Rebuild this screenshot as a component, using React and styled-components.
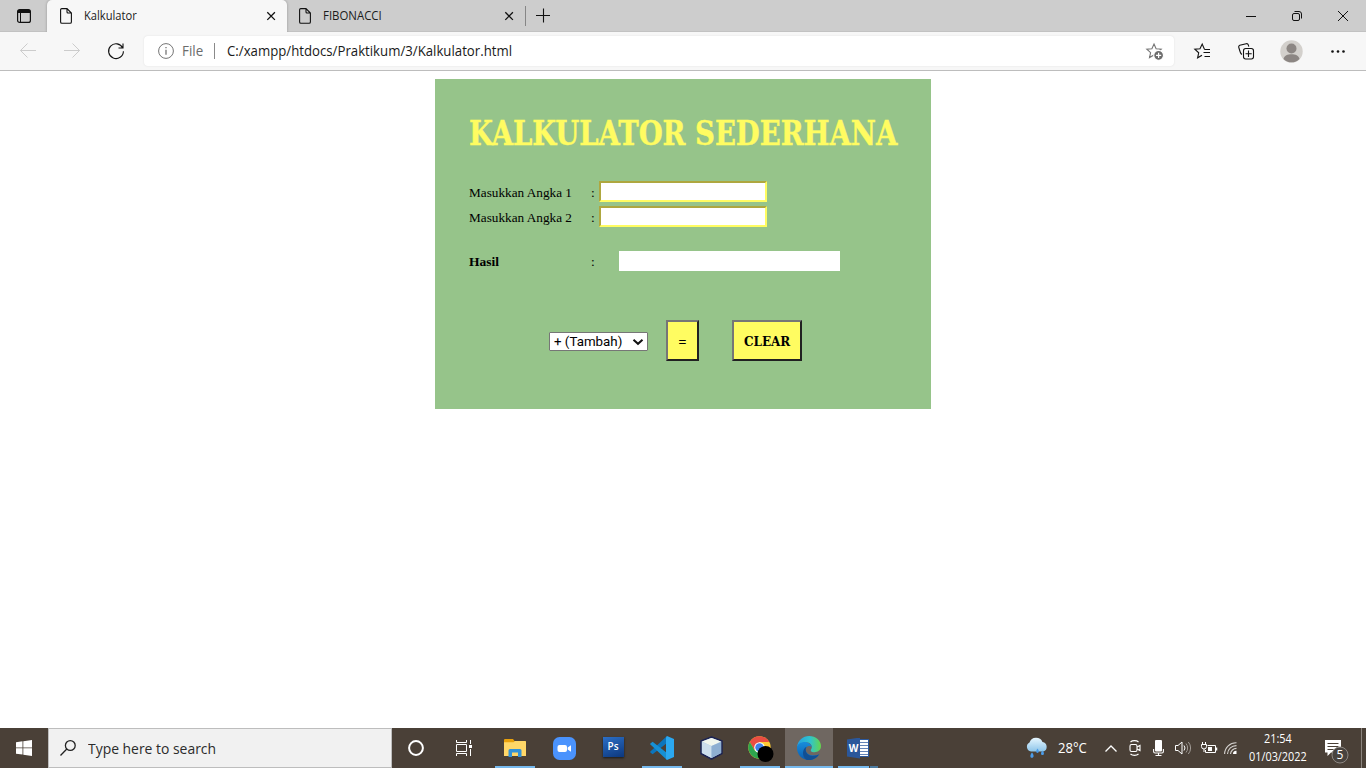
import React, { useLayoutEffect, useRef, useState } from "react";
import styled, { createGlobalStyle } from "styled-components";

const Global = createGlobalStyle`
  * { box-sizing: border-box; }
  body { margin: 0; overflow: hidden; background: #fff; font-family: "Open Sans", "Noto Sans", sans-serif; }
`;

const FitBox = styled.span`
  display: block;
  flex: none;
  width: ${(p) => p.$w}px;
  white-space: nowrap;
`;
const FitInner = styled.span`
  display: inline-block;
  transform-origin: 0 50%;
`;

/* Keeps a line of text at a fixed width, whatever the font's own advance is. */
function Fit({ width, children }) {
  const ref = useRef(null);
  const [scale, setScale] = useState(1);
  useLayoutEffect(() => {
    setScale(width / ref.current.offsetWidth);
  }, [width]);
  return (
    <FitBox $w={width}>
      <FitInner ref={ref} style={{ transform: `scaleX(${scale})` }}>{children}</FitInner>
    </FitBox>
  );
}

const Screen = styled.div`
  width: 1366px;
  height: 768px;
  display: flex;
  flex-direction: column;
  overflow: hidden;
`;
const Icon = styled.svg`
  display: block;
  flex: none;
  overflow: visible;
`;

/* Browser chrome */
const TabStrip = styled.div`
  height: 32px;
  flex: none;
  display: flex;
  background: #cdcdcd;
  box-shadow: inset 0 -1px 0 #c2c2c2;
`;
const TabActions = styled.div`
  width: 47px;
  padding: 9px 0 0 17px;
`;
const Tab = styled.div`
  width: ${(p) => p.$w}px;
  height: 32px;
  display: flex;
  align-items: center;
  padding: 0 11px 0 ${(p) => (p.$active ? 13 : 12)}px;
  border-radius: 5px 5px 0 0;
  background: ${(p) => (p.$active ? "#f7f7f7" : "transparent")};
  box-shadow: ${(p) => (p.$active ? "0 0 3px rgba(0,0,0,.28)" : "none")};
  clip-path: inset(0 -4px 0 -4px);
  font-size: 12px;
  line-height: 16px;
  color: #1b1b1b;
`;
const TabTitle = styled.div`
  flex: 1;
  padding-left: 12px;
`;
const NewTab = styled.div`
  height: 20px;
  margin-top: 6px;
  padding: 2px 0 0 10px;
  border-left: 1px solid #868686;
`;
const WindowButtons = styled.div`
  margin-left: auto;
  display: flex;
`;
const WindowButton = styled.div`
  width: 46px;
  height: 32px;
  display: grid;
  place-items: center;
`;
const Toolbar = styled.div`
  height: 39px;
  flex: none;
  display: flex;
  align-items: center;
  background: #f7f7f7;
  border-bottom: 1px solid #bdbdbd;
`;
const NavButtons = styled.div`
  width: 144px;
  display: flex;
  gap: 28px;
  padding-left: 20px;
`;
const AddressBar = styled.div`
  width: 1030px;
  height: 30px;
  display: flex;
  align-items: center;
  padding: 0 10px 0 14px;
  border-radius: 4px;
  background: #fff;
  box-shadow: 0 0 2px rgba(0, 0, 0, 0.1);
  font-size: 14px;
  line-height: 20px;
  color: #1a1a1a;
`;
const Scheme = styled.div`
  height: 16px;
  display: flex;
  align-items: center;
  margin: 0 12px 0 8px;
  padding-right: 11px;
  border-right: 1px solid #8a8a8a;
  color: #6c6c6c;
`;
const Url = styled.div`
  flex: 1;
`;
const ToolbarIcons = styled.div`
  flex: 1;
  display: flex;
  align-items: center;
  padding-left: 20px;
`;
const ToolSlot = styled.div`
  width: ${(p) => p.$w}px;
`;

/* Page */
const Page = styled.main`
  flex: 1;
  padding-top: 8px;
  background: #fff;
`;
const Calculator = styled.section`
  width: 496px;
  height: 330px;
  margin: 0 auto;
  padding: 32px 34px 0;
  background: #96c48a;
  color: #000;
  font-family: "Liberation Serif", serif;
  font-size: 13.5px;
`;
const Title = styled.h1`
  height: 45px;
  margin: 0 0 25px;
  font-family: "DejaVu Serif Condensed", "DejaVu Serif", serif;
  font-stretch: condensed;
  font-size: 33px;
  line-height: 45px;
  font-weight: bold;
  color: #fffc61;
  -webkit-text-stroke: 0.4px #fffc61;
`;
const Row = styled.div`
  height: 21px;
  display: flex;
  align-items: center;
  margin-bottom: ${(p) => p.$gap}px;
  line-height: 21px;
`;
const Label = styled.label`
  width: 121px;
  padding-top: 2px;
  font-weight: ${(p) => (p.$bold ? "bold" : "normal")};
`;
const Colon = styled.span`
  width: ${(p) => p.$w}px;
  padding: 2px 0 0 1px;
`;
const NumberInput = styled.input`
  width: 168px;
  height: 21px;
  padding: 1px 2px;
  border: 2px solid;
  border-color: #aea73f #fffc61 #fffc61 #aea73f;
  border-radius: 0;
  background: #fff;
  outline: 0;
`;
const Result = styled.output`
  width: 221px;
  height: 20px;
  background: #fff;
`;
const Controls = styled.div`
  display: flex;
  align-items: center;
  padding-left: 80px;
`;
const Operator = styled.div`
  width: 99px;
  height: 19px;
  display: flex;
  align-items: center;
  justify-content: space-between;
  margin: 2px 18px 0 0;
  padding: 0 4px;
  border: 1px solid #767676;
  border-radius: 1px;
  background: #fff;
  font-family: Roboto, sans-serif;
  font-size: 13.33px;
  line-height: 17px;
`;
const Button = styled.button`
  width: ${(p) => p.$w}px;
  height: 41px;
  display: grid;
  place-items: center;
  margin: 0 33px 0 0;
  padding: 2px 0 0;
  border: 2px solid;
  border-color: #767676 #212121 #212121 #767676;
  background: #fffc61;
  color: #000;
  font-family: "DejaVu Serif Condensed", "DejaVu Serif", serif;
  font-stretch: condensed;
  font-size: 13px;
  font-weight: ${(p) => (p.$plain ? "normal" : "bold")};
`;

/* Taskbar */
const Taskbar = styled.footer`
  height: 40px;
  flex: none;
  display: flex;
  background: #4a4037;
  color: #fff;
`;
const Start = styled.div`
  width: 48px;
  display: grid;
  place-items: center;
`;
const Search = styled.div`
  width: 344px;
  display: flex;
  align-items: center;
  gap: 12px;
  padding-left: 11px;
  border: 1px solid #bdbdbd;
  background: #f1f1f1;
  color: #2b2b2b;
  font-size: 15px;
  line-height: 20px;
`;
const System = styled.div`
  width: 98px;
  display: flex;
`;
const Task = styled.div`
  width: ${(p) => p.$w || 49}px;
  height: 40px;
  display: grid;
  place-items: center;
  padding-left: ${(p) => (p.$w ? 0 : 1)}px;
  background: ${(p) => (p.$active ? "linear-gradient(to right, transparent 1px, #6f6761 1px)" : "none")};
`;
const Running = styled.div`
  grid-area: 1 / 1;
  align-self: end;
  justify-self: start;
  width: ${(p) => p.$w}px;
  height: 2px;
  margin-left: ${(p) => (48 - p.$w) / 2}px;
  background: ${(p) => (p.$stack ? "linear-gradient(to right, #76b9ed 31px, #4a4037 31px 32px, #4c7ba0 32px)" : "#76b9ed")};
`;
const TaskIcon = styled.div`
  grid-area: 1 / 1;
`;
const Tray = styled.div`
  margin-left: auto;
  display: flex;
  align-items: center;
  padding-right: 4px;
`;
const Weather = styled.div`
  display: flex;
  align-items: center;
  gap: 10px;
  margin-right: 17px;
  font-size: 14px;
  line-height: 20px;
`;
const TraySlot = styled.div`
  width: ${(p) => p.$w}px;
  display: grid;
  place-items: center;
`;
const Clock = styled.div`
  width: 58px;
  display: flex;
  flex-direction: column;
  align-items: center;
  margin: 0 16px 0 0;
  font-size: 12px;
  line-height: 18px;
`;
const Notice = styled.div`
  width: 39px;
  height: 40px;
  padding: 11px 0 0 1px;
  border-right: 1px solid #8b847e;
`;

const PageIcon = () => (
  <Icon width="12" height="16" viewBox="0 0 12 16" fill="none" stroke="#111" strokeWidth="1.1">
    <path d="M1.8 .6H7L11.4 5V14a1.3 1.3 0 0 1-1.3 1.3H1.9A1.3 1.3 0 0 1 .6 14V1.8A1.2 1.2 0 0 1 1.8.6ZM7 .6V4a1 1 0 0 0 1 1h3.4" />
  </Icon>
);
const CloseIcon = () => (
  <Icon width="10" height="10" viewBox="0 0 10 10" stroke="#111" strokeWidth="1.3">
    <path d="M1.3 1.3l7.600 7.600M8.900 1.300L1.300 8.900" />
  </Icon>
);
const STAR = "M8 1L10.1 5.7L15.2 6.2L11.4 9.6L12.5 14.6L8 12L3.5 14.6L4.6 9.6L.8 6.2L5.9 5.7Z";

function BrowserTab({ title, width, textWidth, active }) {
  return (
    <Tab $w={width} $active={active}>
      <PageIcon />
      <TabTitle><Fit width={textWidth}>{title}</Fit></TabTitle>
      <CloseIcon />
    </Tab>
  );
}

function Browser() {
  return (
    <>
      <TabStrip>
        <TabActions>
          <Icon width="14" height="14" viewBox="0 0 14 14" fill="none" stroke="#111" strokeWidth="1.2">
            <rect x=".6" y=".6" width="12.8" height="12.8" rx="2" />
            <path d="M1 2.5h12" strokeWidth="3" /><path d="M3.500 4v9" strokeWidth="1" />
          </Icon>
        </TabActions>
        <BrowserTab title="Kalkulator" width={240} textWidth={53} active />
        <BrowserTab title="FIBONACCI" width={238} textWidth={59} />
        <NewTab>
          <Icon width="14" height="14" viewBox="0 0 14 14" stroke="#111" strokeWidth="1.1"><path d="M0 7.5h14M7.5 0.500v14" /></Icon>
        </NewTab>
        <WindowButtons>
          <WindowButton><Icon width="10" height="10" stroke="#111"><path d="M0 5.5h10" /></Icon></WindowButton>
          <WindowButton>
            <Icon width="10" height="10" viewBox="0 0 10 10" fill="none" stroke="#111">
              <rect x=".5" y="2.5" width="7" height="7" rx="1.5" /><path d="M2.5.5H7A2.5 2.5 0 0 1 9.5 3v4.5" />
            </Icon>
          </WindowButton>
          <WindowButton><Icon width="10" height="10" viewBox="0 0 10 10" stroke="#111"><path d="M0 0l10 10M10 0L0 10" /></Icon></WindowButton>
        </WindowButtons>
      </TabStrip>
      <Toolbar>
        <NavButtons>
          <Icon width="16" height="16" viewBox="0 0 16 16" fill="none" stroke="#ccc" strokeWidth="1"><path d="M16 7.5H.5M7.5.5l-7 7 7 7" /></Icon>
          <Icon width="16" height="16" viewBox="0 0 16 16" fill="none" stroke="#ccc" strokeWidth="1"><path d="M0 7.5h15.5M8.5.5l7 7-7 7" /></Icon>
          <Icon width="16" height="16" viewBox="0 0 16 16" fill="none" stroke="#111" strokeWidth="1.100"><path d="M14.7 5A7.400 7.400 0 1 0 15.400 8.200M15 .5V5H10.500" /></Icon>
        </NavButtons>
        <AddressBar>
          <Icon width="16" height="16" viewBox="0 0 16 16" fill="none" stroke="#757575"><circle cx="8" cy="8" r="7.4" /><path d="M8 6.8v5M8 4v1.3" strokeWidth="1.3" /></Icon>
          <Scheme><Fit width={21}>File</Fit></Scheme>
          <Url><Fit width={285}>C:/xampp/htdocs/Praktikum/3/Kalkulator.html</Fit></Url>
          <Icon width="18" height="17" viewBox="0 0 18 17" fill="none" stroke="#757575" strokeWidth="1.1">
            <path d={STAR} />
            <circle cx="12.6" cy="12.3" r="4.9" fill="#6c6c6c" stroke="#fff" /><path d="M10 12.3h5.2M12.6 9.7v5.2" stroke="#fff" strokeWidth="1.2" />
          </Icon>
        </AddressBar>
        <ToolbarIcons>
          <ToolSlot $w={44}>
            <Icon width="18" height="17" viewBox="0 0 18 17" fill="none" stroke="#111" strokeWidth="1.1">
              <path d="M10.800 5.700H10.200L8.200 1 6 5.700.8 6.2l3.900 3.600-1.100 5L8 12.200" />
              <path d="M10.300 6.500h5.700M9.500 9.500h6.500M10.500 13.500h5.500" />
            </Icon>
          </ToolSlot>
          <ToolSlot $w={42}>
            <Icon width="17" height="17" viewBox="0 0 17 17" fill="none" stroke="#111" strokeWidth="1.1">
              <path d="M4 11.500C3 11 2.500 10 2.200 9L.8 4.500A1.700 1.700 0 0 1 1.800 2.300L8.200.7a1.800 1.800 0 0 1 2.100 1.200l.5 1.700" />
              <rect x="5.500" y="5.500" width="10" height="10.500" rx="2.2" /><path d="M10.500 7.500v6.500M7.500 10.700h6.200" />
            </Icon>
          </ToolSlot>
          <ToolSlot $w={51}>
            <Icon width="23" height="23" viewBox="0 0 23 23">
              <circle cx="11.5" cy="11.5" r="11.2" fill="#d3d0cc" /><circle cx="11.5" cy="8.5" r="5" fill="#8c8683" />
              <path d="M3.5 19C4.3 15.5 7.5 14.3 11.5 14.3s7.2 1.2 8 4.7A11.2 11.2 0 0 1 3.5 19Z" fill="#8c8683" />
            </Icon>
          </ToolSlot>
          <Icon width="14" height="3" viewBox="0 0 14 3" fill="#111"><circle cx="1.5" cy="1.5" r="1.3" /><circle cx="7" cy="1.5" r="1.3" /><circle cx="12.5" cy="1.5" r="1.3" /></Icon>
        </ToolbarIcons>
      </Toolbar>
    </>
  );
}

function Kalkulator() {
  return (
    <Calculator>
      <Title><Fit width={428}>KALKULATOR SEDERHANA</Fit></Title>
      <Row $gap={4}><Label><Fit width={103}>Masukkan Angka 1</Fit></Label><Colon $w={9}>:</Colon><NumberInput /></Row>
      <Row $gap={23}><Label><Fit width={103}>Masukkan Angka 2</Fit></Label><Colon $w={9}>:</Colon><NumberInput /></Row>
      <Row $gap={49}><Label $bold><Fit width={30}>Hasil</Fit></Label><Colon $w={29}>:</Colon><Result /></Row>
      <Controls>
        <Operator>
          <Fit width={68}>+ (Tambah)</Fit>
          <Icon width="10" height="6" viewBox="0 0 10 6" fill="none" stroke="#111" strokeWidth="2"><path d="M.5.8L5 4.800 9.500.8" /></Icon>
        </Operator>
        <Button $w={33} $plain><Fit width={9}>=</Fit></Button>
        <Button $w={70}><Fit width={46}>CLEAR</Fit></Button>
      </Controls>
    </Calculator>
  );
}

const ExplorerIcon = () => (
  <Icon width="22" height="18" viewBox="0 0 22 18">
    <path d="M0 1a1 1 0 0 1 1-1h8l1.5 2H21a1 1 0 0 1 1 1v14H0Z" fill="#e9a10c" />
    <path d="M0 3.2h9.5L11 2h10.3l.7.7V17H0Z" fill="#ffd768" />
    <path d="M4.5 18v-6.5a1.5 1.5 0 0 1 1.5-1.5h10a1.5 1.5 0 0 1 1.5 1.5V18H14v-4.5H8V18Z" fill="#3292d8" />
  </Icon>
);
const ZoomIcon = () => (
  <Icon width="23" height="23" viewBox="0 0 23 23">
    <rect width="23" height="23" rx="6.5" fill="#4a93fd" />
    <rect x="4.5" y="8" width="9.500" height="7" rx="2" fill="#fff" /><path d="M14.700 10.400l3.300-2.200v6.600l-3.300-2.200Z" fill="#fff" />
  </Icon>
);
const PsBadge = styled.div`
  width: 21px;
  height: 20px;
  margin-bottom: 3px;
  background: linear-gradient(160deg, #2c6fc6, #0c377d);
  box-shadow: 0 1px 2px #1b1b1b;
  color: #fff;
  text-align: center;
  font-size: 10px;
  font-weight: 600;
  line-height: 18px;
`;
const CodeIcon = () => (
  <Icon width="24" height="24" viewBox="0 0 24 24">
    <path d="M17 0v7L2.6 18.2.4 16.6a.8.8 0 0 1 0-1.2Z" fill="#0b75bd" />
    <path d="M17 24v-7L2.6 5.8.4 7.4a.8.8 0 0 0 0 1.2Z" fill="#1690d5" />
    <path d="M17 0l7 3v18l-7 3-1-1.5V1.5Z" fill="#2ba8f0" />
  </Icon>
);
const CubeIcon = () => (
  <Icon width="23" height="24" viewBox="0 0 23 24" stroke="#1d2452" strokeWidth="1.5" strokeLinejoin="round">
    <path d="M11.5 1L22 5v12.5L11.5 23 1 17.5V5Z" fill="#b7d0e6" />
    <path d="M2 5.6L11.5 2 21 5.6 11.5 10Z" fill="#f1f6ee" stroke="none" />
    <path d="M2 6v11l9.5 5V10Z" fill="#cddfed" stroke="none" /><path d="M21 6v11l-9.5 5V10Z" fill="#8eafd2" stroke="none" />
  </Icon>
);
const ChromeIcon = () => (
  <Icon width="24" height="24" viewBox="0 0 24 24">
    <circle cx="11.5" cy="11.5" r="11.2" fill="#fcc934" />
    <path d="M1.8 5.9A11.2 11.2 0 0 1 21.2 5.9H11.5L6.6 14.3Z" fill="#ea4d42" />
    <path d="M1.8 5.9A11.2 11.2 0 0 0 11.5 22.7L16.3 14.3 11 17 6.6 14.3Z" fill="#2da64e" />
    <circle cx="11.5" cy="11.5" r="5.3" fill="#fff" /><circle cx="11.5" cy="11.5" r="4.2" fill="#3f7fe8" />
    <circle cx="17.5" cy="18" r="8" fill="#000" />
  </Icon>
);
const EdgeIcon = () => (
  <Icon width="24" height="24" viewBox="0 0 24 24">
    <defs>
      <linearGradient id="edgeTop"><stop offset="0" stopColor="#249fdf" /><stop offset=".55" stopColor="#2fc4ce" /><stop offset="1" stopColor="#65d54b" /></linearGradient>
      <linearGradient id="edgeLow" x2="0" y2="1"><stop stopColor="#178ddb" /><stop offset="1" stopColor="#0c5db0" /></linearGradient>
    </defs>
    <path d="M0 11C1 4 6 0 12 0c7 0 12 4.700 12 10 0 4-3 6.200-6.500 6.200-3.500 0-4.300-1.500-3.300-3C17 9 11 4.500 5.800 7 3 8.200 1 9.500 0 11Z" fill="url(#edgeTop)" />
    <path d="M0 12C0 8 4 6 7.500 6c4.200 0 7 2.500 7.400 5.500-2-2.800-6.200-1.500-6.200 2 0 5 6.800 7.500 13.500 4.700C20 21.800 16.500 24 12 24 5 24 0 18.500 0 12Z" fill="url(#edgeLow)" />
    <path d="M9.500 23.700C4.500 20.500 5.200 13 9.500 10.700c-2 4 0 9 6 9.200 2.500.1 4.700-.6 6.700-1.700C20 21.800 14.800 25 9.500 23.700Z" fill="#124f93" />
  </Icon>
);
const WordBadge = styled.div`
  width: 22px;
  height: 21px;
  display: flex;
  align-items: center;
`;
const WordCover = styled.div`
  width: 13px;
  height: 21px;
  background: #2b579a;
  clip-path: polygon(0 10%, 100% 0, 100% 100%, 0 90%);
  color: #fff;
  text-align: center;
  font-size: 10px;
  font-weight: bold;
  line-height: 20px;
`;
const WordPage = styled.div`
  width: 9px;
  height: 18px;
  border: 1px solid #2b579a;
  border-left: 0;
  background: repeating-linear-gradient(#fff 0 2px, #6585b8 2px 3px);
`;
const WeatherIcon = () => (
  <Icon width="22" height="20" viewBox="0 0 22 20">
    <defs><linearGradient id="cloud" x2="0" y2="1"><stop stopColor="#e6f6ff" /><stop offset="1" stopColor="#8dc5e9" /></linearGradient></defs>
    <path d="M5 13.500A4.800 4.800 0 0 1 3.500 4.500 7 7 0 0 1 16.500 4a4.900 4.900 0 0 1 .8 9.500Z" fill="url(#cloud)" />
    <path d="M11.500 10.500c2 2.600 1.500 4.400 0 4.400s-2-1.800 0-4.400ZM6 14.500c2.400 2.800 1.900 5.300 0 5.300s-2.400-2.400 0-5.300ZM16.500 12.500c2.200 2.600 1.700 4.600 0 4.600s-2.200-2 0-4.600Z" fill="#4b9be8" />
  </Icon>
);

function WindowsBar() {
  return (
    <Taskbar>
      <Start>
        <Icon width="16" height="16" viewBox="0 0 16 16" fill="#fff"><path d="M0 2.200L6.500 1.300V7.500H0ZM7.300 1.200L16 0V7.500H7.300ZM0 8.300h6.500v6.300L0 13.700ZM7.300 8.300H16V16L7.300 14.800Z" /></Icon>
      </Start>
      <Search>
        <Icon width="16" height="16" viewBox="0 0 16 16" fill="none" stroke="#222" strokeWidth="1.3"><circle cx="10.300" cy="5.500" r="4.900" /><path d="M6.800 9L.5 15.500" /></Icon>
        <Fit width={128}>Type here to search</Fit>
      </Search>
      <System>
        <Task $w={48}><Icon width="16" height="16" fill="none" stroke="#fff" strokeWidth="2"><circle cx="8" cy="8" r="6.900" /></Icon></Task>
        <Task $w={48}>
          <Icon width="16" height="16" viewBox="0 0 16 16" fill="none" stroke="#fff">
            <path d="M.5 0v2.500h10V0M.5 16v-2.500h10V16M.5 4.500h10v7H.500ZM14.500 0v4M14.500 9v7" /><rect x="13" y="5" width="3" height="3" fill="#fff" stroke="none" />
          </Icon>
        </Task>
      </System>
      <Task><TaskIcon><ExplorerIcon /></TaskIcon><Running $w={40} /></Task>
      <Task><TaskIcon><ZoomIcon /></TaskIcon></Task>
      <Task><TaskIcon><PsBadge>Ps</PsBadge></TaskIcon></Task>
      <Task><TaskIcon><CodeIcon /></TaskIcon><Running $w={40} /></Task>
      <Task><TaskIcon><CubeIcon /></TaskIcon></Task>
      <Task><TaskIcon><ChromeIcon /></TaskIcon><Running $w={40} /></Task>
      <Task $active><TaskIcon><EdgeIcon /></TaskIcon><Running $w={48} /></Task>
      <Task><TaskIcon><WordBadge><WordCover>W</WordCover><WordPage /></WordBadge></TaskIcon><Running $w={40} $stack /></Task>
      <Tray>
        <Weather><WeatherIcon /><Fit width={29}>28°C</Fit></Weather>
        <TraySlot $w={13}><Icon width="12" height="7" fill="none" stroke="#fff" strokeWidth="1.300"><path d="M.5 6.500L6 1l5.500 5.500" /></Icon></TraySlot>
        <TraySlot $w={36}>
          <Icon width="12" height="16" viewBox="0 0 12 16" fill="none" stroke="#fff" strokeWidth="1.100">
            <rect x="1" y="4.500" width="7" height="7" rx="1.500" /><path d="M8 7l3-1.500v5L8 9M1.500 2c2-1.800 6-1.800 8 0M1.500 14c2 1.800 6 1.800 8 0" />
          </Icon>
        </TraySlot>
        <TraySlot $w={11}>
          <Icon width="11" height="16" viewBox="0 0 11 16" fill="none" stroke="#fff" strokeWidth="1.100">
            <rect x="2" y="0" width="7" height="11.500" rx="1" fill="#fff" stroke="none" /><path d="M.6 9v2.500a1.500 1.500 0 0 0 1.500 1.500h6.800a1.500 1.500 0 0 0 1.500-1.500V9M5.500 13v2.500M2.500 15.500h6" />
          </Icon>
        </TraySlot>
        <TraySlot $w={37}>
          <Icon width="16" height="14" viewBox="0 0 16 14" fill="none" stroke="#fff">
            <path d="M.5 4.500h2.500L7 1v12L3 9.500H.5Z" /><path d="M9 4.500a4 4 0 0 1 0 5" /><path d="M11 2.500a7 7 0 0 1 0 9M13.300 1a9 9 0 0 1 0 12" stroke="#a29c97" />
          </Icon>
        </TraySlot>
        <TraySlot $w={11}>
          <Icon width="16" height="12" viewBox="0 0 16 12" fill="none" stroke="#fff">
            <path d="M6.500 3.500h8v7h-10V8" /><path d="M15.500 5.500v3" strokeWidth="1.500" /><rect x="7" y="5" width="4" height="4" fill="#fff" stroke="none" /><path d="M1.500 0v2M4.500 0v2M.5 2.500h5v2a2.500 2.500 0 0 1-5 0ZM3 7v3" />
          </Icon>
        </TraySlot>
        <TraySlot $w={37}>
          <Icon width="13" height="12" viewBox="0 0 13 12" fill="none" stroke="#d5d2cf" strokeWidth="1.100">
            <path d="M.6 12A11.500 11.500 0 0 1 12.500.8M3.500 12a8.800 8.800 0 0 1 9-8.400M6.500 12a6 6 0 0 1 6-5.600" /><path d="M9 12a3 3 0 0 1 3.500-3.200V12Z" fill="#fff" stroke="none" />
          </Icon>
        </TraySlot>
        <Clock><Fit width={28}>21:54</Fit><Fit width={58}>01/03/2022</Fit></Clock>
        <Notice>
          <Icon width="25" height="25" viewBox="0 0 25 25">
            <path d="M1 1h16v12.500H7L3.500 17v-3.500H1Z" fill="#fff" /><path d="M3.500 4.500h11M3.500 7.500h11M3.500 10.500h6" stroke="#4a4037" />
            <circle cx="16" cy="16" r="8" fill="#48433f" stroke="#8d8782" />
            <text x="16" y="20.200" textAnchor="middle" fontSize="12" fontFamily="Open Sans" fill="#fff">5</text>
          </Icon>
        </Notice>
      </Tray>
    </Taskbar>
  );
}

export default function App() {
  return (
    <Screen>
      <Global />
      <Browser />
      <Page><Kalkulator /></Page>
      <WindowsBar />
    </Screen>
  );
}
